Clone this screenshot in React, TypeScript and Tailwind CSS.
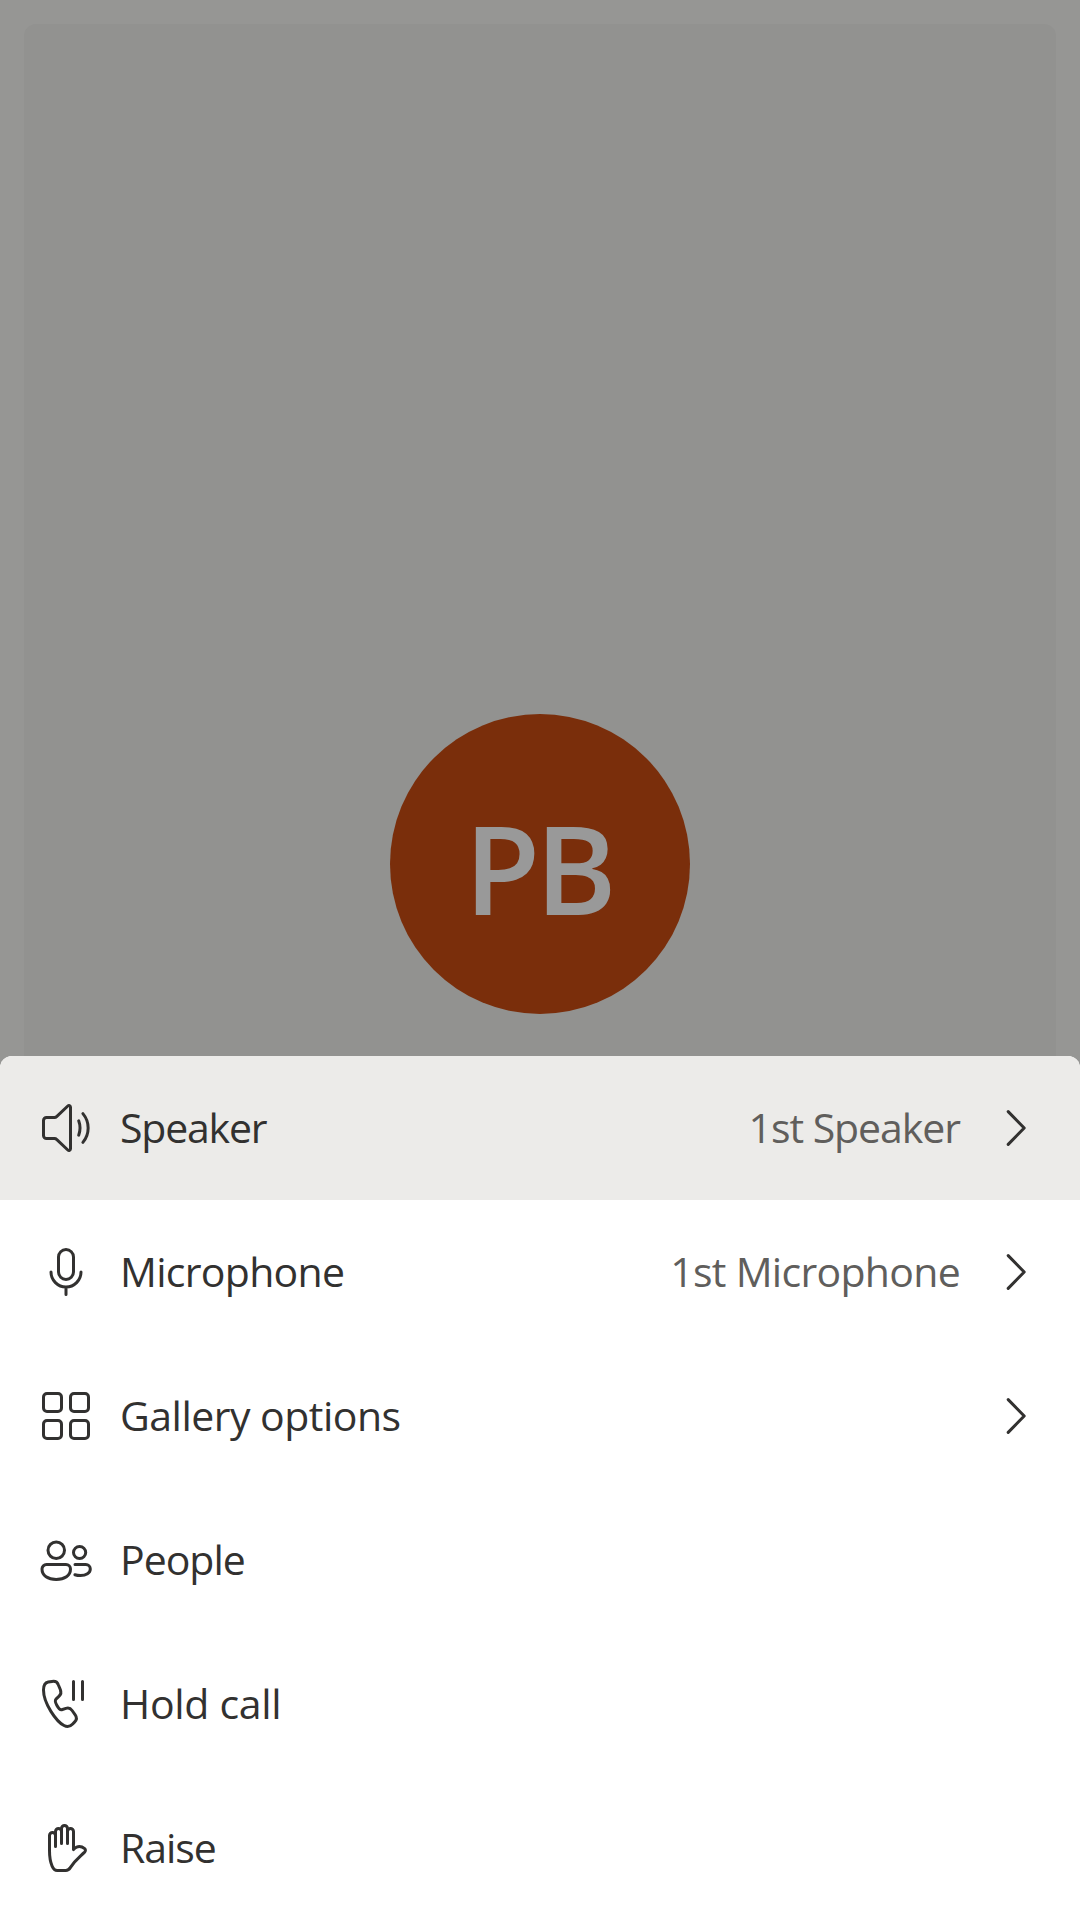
import type { ReactNode } from "react";

function Icon({ children }: { children: ReactNode }) {
  return (
    <svg
      className="h-[60px] w-[60px] shrink-0"
      viewBox="0 0 60 60"
      fill="none"
      stroke="#323130"
      strokeWidth={3}
      strokeLinecap="round"
      strokeLinejoin="round"
      aria-hidden="true"
    >
      {children}
    </svg>
  );
}

const SpeakerIcon = () => (
  <Icon>
    <path d="M34.5 9.2v41.6c0 1.6-1.6 2.2-2.7 1.2L20.6 41.4a3 3 0 0 0-2.1-.9h-8a3 3 0 0 1-3-3v-15a3 3 0 0 1 3-3h8a3 3 0 0 0 2.1-.9L31.8 8c1.1-1 2.7-.4 2.7 1.2Z" />
    <path d="M42.7 22.8c1.7 4.6 1.7 9.8 0 14.4" />
    <path d="M46.9 15.6c7 8.4 7 20.4 0 28.8" />
  </Icon>
);

const MicIcon = () => (
  <Icon>
    <rect x="22.5" y="7.5" width="15" height="30" rx="7.5" />
    <path d="M15 30a15 15 0 0 0 30 0M30 45v7.5" />
  </Icon>
);

const GalleryIcon = () => (
  <Icon>
    <rect x="7.5" y="7.5" width="18" height="18" rx="3.5" />
    <rect x="34.5" y="7.5" width="18" height="18" rx="3.5" />
    <rect x="7.5" y="34.5" width="18" height="18" rx="3.5" />
    <rect x="34.5" y="34.5" width="18" height="18" rx="3.5" />
  </Icon>
);

const PeopleIcon = () => (
  <Icon>
    <circle cx="20.25" cy="20.25" r="8.25" />
    <circle cx="43.6" cy="22.5" r="6.1" />
    <path d="M10.5 34.5H30a4.5 4.5 0 0 1 4.5 4.5c0 6.7-6 10.5-14.25 10.5S6 45.7 6 39a4.5 4.5 0 0 1 4.5-4.5Z" />
    <path d="M39 34.5h10.8a4.5 4.5 0 0 1 4.5 4.5c0 4-4.3 6.5-9.8 6.5-2 0-4-.3-5.6-.8" />
  </Icon>
);

const HoldCallIcon = () => (
  <Icon>
    <path d="M12.2 8 16 7.4c3-.5 5.3.6 6.3 3.3l2.1 5.1c.9 2.2.4 4.7-1.3 6.3l-3.1 3c-1.3 1.3-.7 3.4.8 6.2 1.5 2.8 3 4.8 4.9 4.4l4.2-1.3c2.3-.7 4.8.1 6.2 2.1l3.1 4.3c1.7 2.4 1.4 5.1-.5 7.1l-2 2.1c-2.3 2.4-5.7 3.1-8.7 1.5C20.4 47.6 7.5 29.5 7.5 16c0-4 1.2-7.3 4.7-8Z" />
    <path d="M37.5 7.5v18M46.5 7.5v18" />
  </Icon>
);

const HandIcon = () => (
  <Icon>
    <path d="M19.5 28.5V17.4a3 3 0 0 0-6 0v15.1c0 6 .8 11.5 2.6 15.6 1.5 3.4 2.6 4.4 5.1 4.4h8.6c2.3 0 3.3-.8 4.7-3.1 4.6-7.4 7.8-9.3 14.1-15.3 1.1-1.1 1.1-2.6.1-3.4-2-1.6-5.3-2.7-8.1-1.6-1.1.5-2.1 1.3-3.1 2.5V13.5a3 3 0 0 0-6 0" />
    <path d="M19.5 18v-4.5a3 3 0 0 1 6 0v12" />
    <path d="M25.5 13.5v-3a3 3 0 0 1 6 0v15" />
  </Icon>
);

const ChevronIcon = () => (
  <Icon>
    <path d="M24.2 13.6 40.2 30l-16 16.4" />
  </Icon>
);

type Item = {
  icon: ReactNode;
  label: string;
  labelClass: string;
  value?: string;
  valueClass?: string;
  chevron?: boolean;
  active?: boolean;
};

const items: Item[] = [
  { icon: <SpeakerIcon />, label: "Speaker", labelClass: "tracking-[-1.2px]", value: "1st Speaker", valueClass: "tracking-[-1.05px]", chevron: true, active: true },
  { icon: <MicIcon />, label: "Microphone", labelClass: "tracking-[-0.7px]", value: "1st Microphone", valueClass: "tracking-[-0.7px]", chevron: true },
  { icon: <GalleryIcon />, label: "Gallery options", labelClass: "tracking-[-0.52px]", chevron: true },
  { icon: <PeopleIcon />, label: "People", labelClass: "tracking-[-1px]" },
  { icon: <HoldCallIcon />, label: "Hold call", labelClass: "tracking-[-0.3px]" },
  { icon: <HandIcon />, label: "Raise", labelClass: "tracking-[-1.05px]" },
];

function MenuRow({ item }: { item: Item }) {
  return (
    <li className={`flex h-36 items-center px-9 ${item.active ? "bg-[#ecebe9]" : "bg-white"}`}>
      {item.icon}
      <span className={`ml-6 flex-1 pb-[2px] text-[41px] leading-[56px] whitespace-nowrap text-[#323130] ${item.labelClass}`}>
        {item.label}
      </span>
      {item.value && (
        <span className={`pb-[2px] text-[41px] leading-[56px] whitespace-nowrap text-[#605e5c] ${item.valueClass}`}>
          {item.value}
        </span>
      )}
      {item.chevron && (
        <div className="ml-6">
          <ChevronIcon />
        </div>
      )}
    </li>
  );
}

export default function App() {
  return (
    <div className="relative h-[1920px] w-[1080px] overflow-hidden bg-[#969694] p-6 font-['Open_Sans','Noto_Sans',sans-serif]">
      <div className="flex h-[1680px] items-center justify-center rounded-xl bg-[#929290]">
        <div className="flex h-[300px] w-[300px] items-center justify-center rounded-full bg-[#7a2e0b] pt-[8px] pr-[4px]">
          <span className="text-[123.7px] leading-none font-semibold tracking-[-5px] text-[#999999]">PB</span>
        </div>
      </div>
      <ul className="absolute inset-x-0 bottom-0 h-[864px] overflow-hidden rounded-t-xl bg-white">
        {items.map((item) => (
          <MenuRow key={item.label} item={item} />
        ))}
      </ul>
    </div>
  );
}
